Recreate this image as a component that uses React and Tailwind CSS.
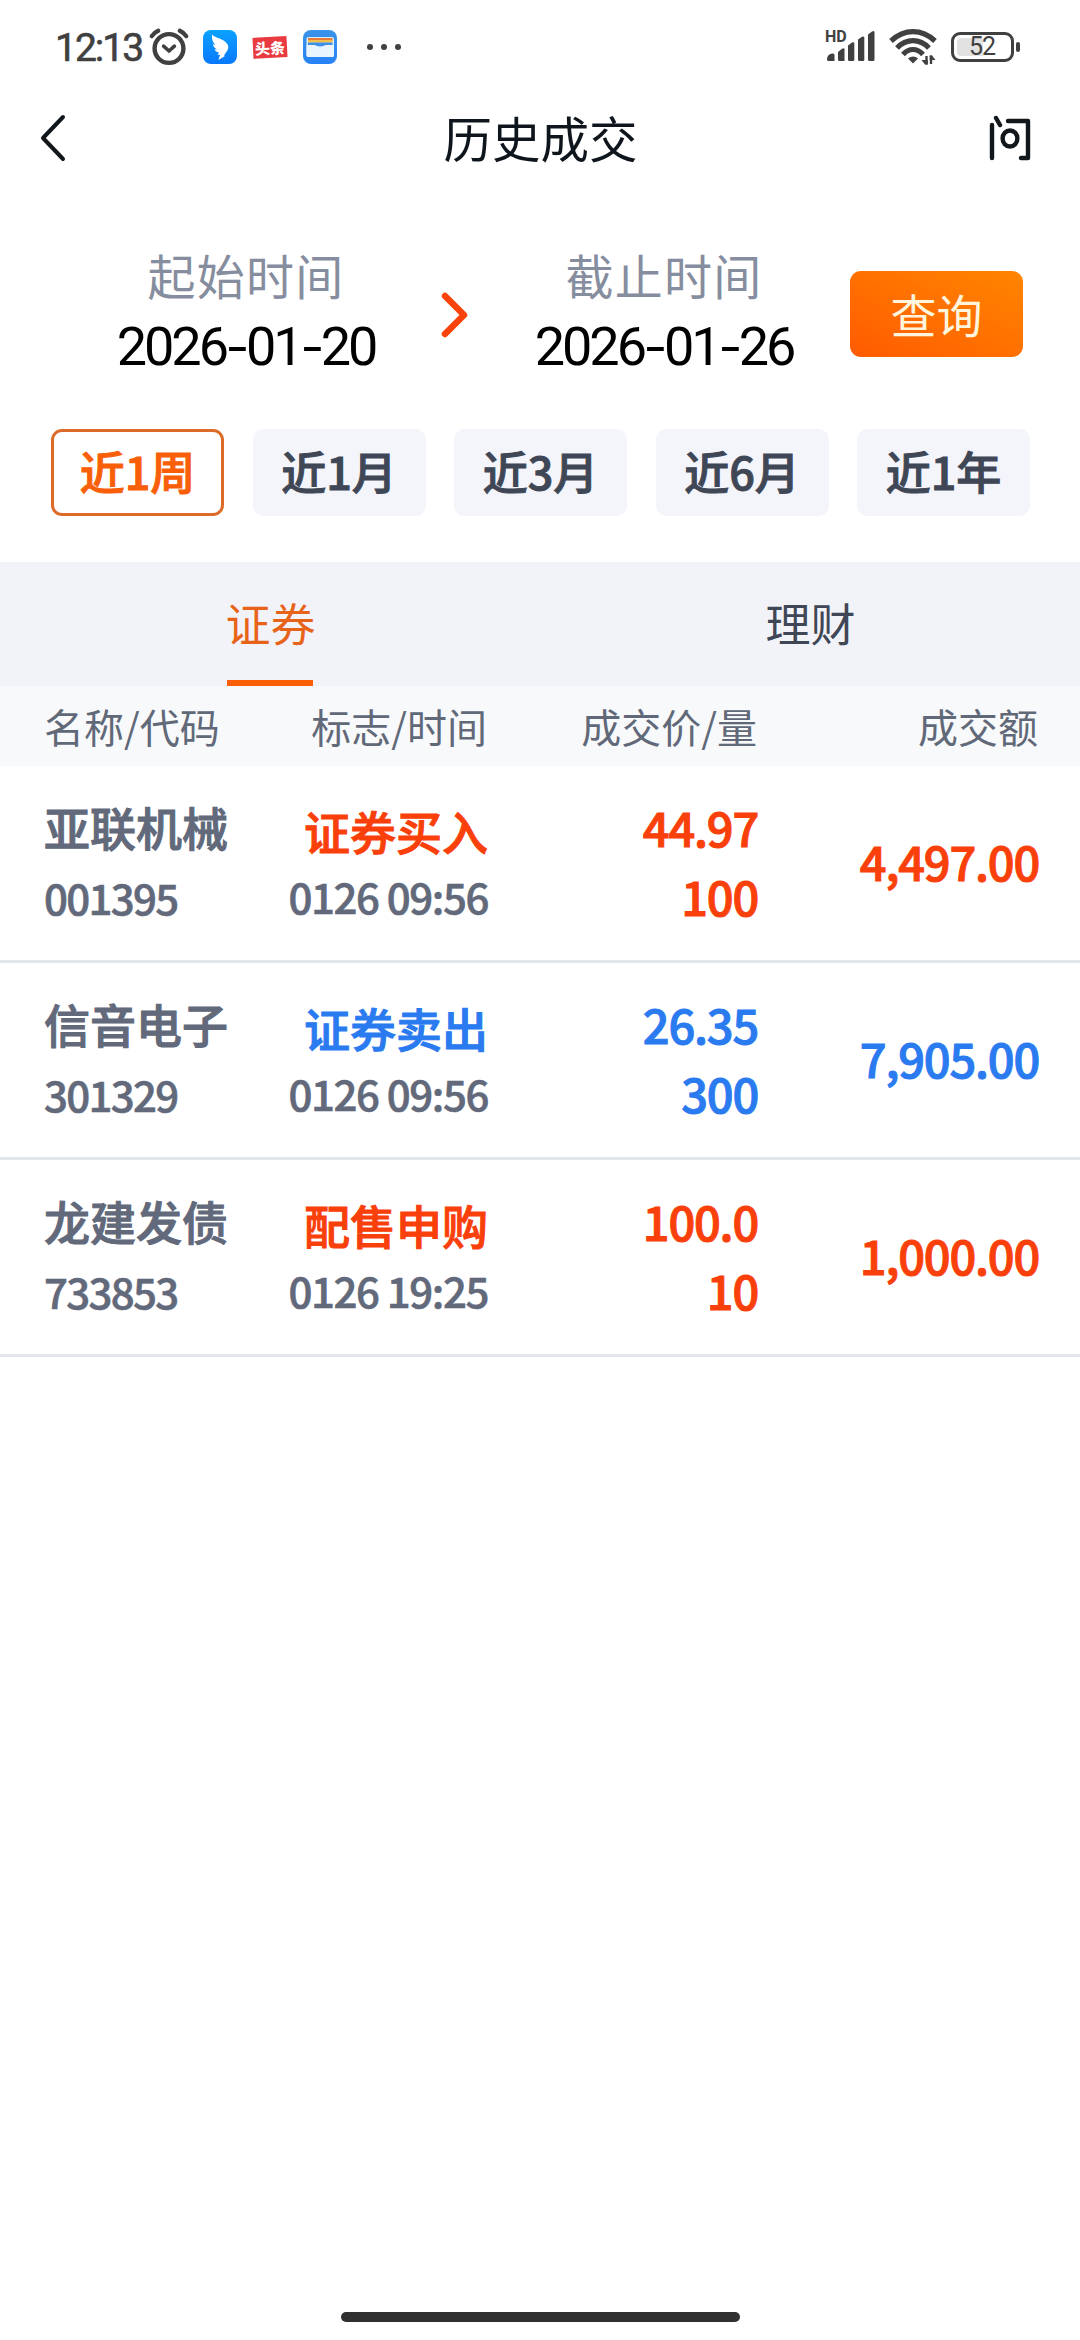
const cjk = "font-['Noto_Sans_CJK_SC','Noto_Sans',sans-serif]";

const trades = [
  { name: "亚联机械", code: "001395", flag: "证券买入", time: "0126 09:56", price: "44.97", qty: "100", amount: "4,497.00", color: "text-[#fa400a]" },
  { name: "信音电子", code: "301329", flag: "证券卖出", time: "0126 09:56", price: "26.35", qty: "300", amount: "7,905.00", color: "text-[#2a7af0]" },
  { name: "龙建发债", code: "733853", flag: "配售申购", time: "0126 19:25", price: "100.0", qty: "10", amount: "1,000.00", color: "text-[#fa400a]" },
];

const ranges = ["近1周", "近1月", "近3月", "近6月", "近1年"];

function AlarmIcon() {
  return (
    <svg width="40" height="38" viewBox="0 0 40 38" fill="none" stroke="#404040" strokeLinecap="round">
      <circle cx="20" cy="20.5" r="14.4" strokeWidth="4.4" />
      <path d="M2.8 8.2Q5 4.6 9.2 2.8M37.2 8.2Q35 4.6 30.8 2.8" strokeWidth="4.2" />
      <path d="M14.6 18.2L20 23L25.4 18.2" strokeWidth="3.6" strokeLinejoin="round" />
    </svg>
  );
}

function WingIcon() {
  return (
    <svg width="34" height="34" viewBox="0 0 34 34">
      <defs>
        <linearGradient id="wing" x1="0" y1="0" x2="0" y2="1">
          <stop offset="0" stopColor="#0aa2ff" />
          <stop offset="1" stopColor="#0878fb" />
        </linearGradient>
      </defs>
      <rect width="34" height="34" rx="8" fill="url(#wing)" />
      <path d="M9 4.5C12 8 21 9 23.5 13C25.5 15 25.8 17.5 24.6 20L21 25.5L22 26L15.4 30L17 25L14.6 24.6L16 22.4C13.5 22 12.2 21 11.6 19.2L14 19.4C11.5 18 10.3 16.5 9.8 14.2L12.5 15C9.8 12.5 8.5 9 9 4.5Z" fill="#fff" />
    </svg>
  );
}

function WalletIcon() {
  return (
    <svg width="34" height="34" viewBox="0 0 34 34">
      <defs>
        <linearGradient id="wallet" x1="0" y1="0" x2="0" y2="1">
          <stop offset="0" stopColor="#3a94e8" />
          <stop offset="1" stopColor="#2882f6" />
        </linearGradient>
      </defs>
      <rect width="34" height="34" rx="8" fill="url(#wallet)" />
      <rect x="3.5" y="7" width="27.5" height="20" rx="2" fill="#d8ecfb" />
      <rect x="5" y="8" width="24.5" height="3" fill="#e8793a" />
      <rect x="5" y="10" width="24.5" height="2.6" fill="#f3c04c" />
      <path d="M5 12.6H29.5V15H23Q17 18.4 11.5 15H5Z" fill="#3f8fe6" />
      <path d="M3.5 15H11.5Q17 18.4 23 15H31V25Q31 27 29 27H5.500Q3.500 27 3.500 25Z" fill="#eaf6ff" />
    </svg>
  );
}

function SignalIcon() {
  return (
    <svg width="52" height="38" viewBox="0 0 52 38" fill="#404040">
      <path d="M2 31.500Q2 26.500 7 25.500Q9.500 25 9.500 27V33H3.500Q2 33 2 31.500Z" />
      <path d="M13 24L17 20.800Q19.500 19.500 19.500 21.500V33H14.500Q13 33 13 31.500Z" />
      <path d="M23 17.500L27 14.500Q29.300 13.500 29.300 15.500V31.500Q29.300 33 28 33H24.500Q23 33 23 31.500Z" />
      <path d="M33 11.500L37 8.800Q39.300 7.800 39.300 9.800V31.500Q39.300 33 38 33H34.500Q33 33 33 31.500Z" />
      <path d="M43 6.500L47 3.500Q49.500 2 49.500 4.500V31.500Q49.500 33 48 33H44.500Q43 33 43 31.500Z" />
    </svg>
  );
}

function WifiIcon() {
  return (
    <svg width="48" height="38" viewBox="0 0 48 38" fill="none" stroke="#404040" strokeWidth="5.200">
      <path d="M2 13Q12 3.700 24 3.700T46 13" />
      <path d="M8 20Q15 12.700 24 12.700T40 20" />
      <path d="M14 26.500Q18.500 21.500 24 21.500T34 26.500" />
      <path d="M19 30.500Q24 26.500 29 30.500L24 35.500Z" fill="#404040" stroke="none" />
      <path d="M37.500 28V36.500M42 36V27.500" strokeWidth="2.400" />
      <path d="M38.800 36.500H36L32.500 32H38.800ZM40.700 27.500H43L46.500 32H40.700Z" fill="#404040" stroke="none" />
    </svg>
  );
}

function StatusBar() {
  return (
    <div className="flex h-[94px] items-center justify-between pl-[55px] pr-[60px] text-[#404040]">
      <div className="flex items-center">
        <span className="w-[94px] whitespace-nowrap pt-[2px] font-['Roboto',sans-serif] text-[39px] font-normal leading-[40px] tracking-[-2px] [-webkit-text-stroke:0.600px_#404040]">12:13</span>
        <span className="mr-[14px] flex"><AlarmIcon /></span>
        <WingIcon />
        <span className="ml-[16px] flex h-[21px] w-[34px] rotate-[-3deg] items-center justify-center bg-[#e83a3f] font-['Noto_Sans_CJK_SC',sans-serif] text-[15px] font-black leading-[20px] text-white">头条</span>
        <span className="ml-[16px] flex"><WalletIcon /></span>
        <span className="ml-[30px] flex gap-[8px]">
          <i className="h-[6px] w-[6px] rounded-full bg-[#404040]" />
          <i className="h-[6px] w-[6px] rounded-full bg-[#404040]" />
          <i className="h-[6px] w-[6px] rounded-full bg-[#404040]" />
        </span>
      </div>
      <div className="flex items-center">
        <div className="relative mr-[12px] flex">
          <span className="absolute left-[0px] top-[1px] font-['Roboto',sans-serif] text-[16px] font-bold leading-[16px]">HD</span>
          <SignalIcon />
        </div>
        <WifiIcon />
        <div className="ml-[14px] flex h-[30px] w-[63px] rounded-[9px] border-[3px] border-[#404040] p-[3px]">
          <div className="relative h-full w-[26px] rounded-l-[4px] bg-[#e2e2e2]">
            <span className="absolute left-[12px] top-[-3px] font-['Roboto',sans-serif] text-[25px] leading-[24px] tracking-[-1px]">52</span>
          </div>
        </div>
        <i className="ml-[2px] h-[10px] w-[4px] rounded-[2px] bg-[#404040]" />
      </div>
    </div>
  );
}

function DateField({ label, value }) {
  const parts = value.split("-");
  return (
    <div className="flex w-[270px] flex-col items-center">
      <span className="text-[48px] leading-[64px] tracking-[1.300px] text-[#868d9e]">{label}</span>
      <span className="flex whitespace-nowrap font-['Roboto',sans-serif] text-[54px] leading-[82px] tracking-[-3px] text-black">
        {parts[0]}
        <span className="ml-[4px] mr-[1px] inline-block scale-x-[1.300] tracking-normal">-</span>
        {parts[1]}
        <span className="ml-[4px] mr-[1px] inline-block scale-x-[1.300] tracking-normal">-</span>
        {parts[2]}
      </span>
    </div>
  );
}

export default function App() {
  return (
    <div className={`${cjk} flex h-[2340px] w-[1080px] flex-col overflow-hidden bg-white`}>
      <StatusBar />

      <header className="flex h-[90px] items-center justify-between pl-[39px] pr-[48px] text-[#0f151c]">
        <svg width="55" height="50" viewBox="0 0 55 50" fill="none" stroke="#12171c" strokeWidth="4" strokeLinecap="round" strokeLinejoin="round">
          <path d="M24 3L4 24L24 45" />
        </svg>
        <h1 className="h-[90px] text-[48.500px] font-normal leading-[86px]">历史成交</h1>
        <svg width="45" height="50" viewBox="0 0 45 50" fill="none" stroke="#12171c" strokeWidth="4.400" strokeLinecap="round" strokeLinejoin="round">
          <path d="M5 11V44M9 4L13 11M21 7H41V44H34" />
          <ellipse cx="23" cy="24.500" rx="7.400" ry="8" />
        </svg>
      </header>

      <section className="flex h-[245px] pt-[58px]">
        <div className="ml-[111px]"><DateField label="起始时间" value="2026-01-20" /></div>
        <svg className="ml-[57px] mt-[48px]" width="32" height="50" viewBox="0 0 32 50" fill="none" stroke="#fa430a" strokeWidth="6.500" strokeLinecap="round" strokeLinejoin="round">
          <path d="M7 6L26 25L7 44" />
        </svg>
        <div className="ml-[59px]"><DateField label="截止时间" value="2026-01-26" /></div>
        <button className="ml-[51px] mt-[29px] h-[86px] w-[173px] rounded-[11px] bg-linear-to-tr from-[#ff5a00] to-[#ff8400] pb-[2px] text-[46px] leading-[80px] text-[#fff4dc]">查询</button>
      </section>

      <nav className="flex h-[133px] justify-between pl-[51px] pr-[50px]">
        {ranges.map((r, i) => (
          <button
            key={r}
            className={`h-[87px] w-[173px] rounded-[11px] border-[3px] pb-[3px] text-[45px] font-medium leading-[76px] [-webkit-text-stroke:1px_currentColor] ${
              i === 0 ? "border-[#dc6a28] text-[#f95f08]" : "border-[#f4f5fa] bg-[#f4f5fa] text-[#3f4756]"
            }`}
          >
            {r}
          </button>
        ))}
      </nav>

      <div className="grid h-[124px] grid-cols-2 bg-[#f2f3f8] text-[45px]">
        <div className="flex flex-col items-center justify-between text-[#e8631a]">
          <span className="h-[118px] pl-px leading-[122px]">证券</span>
          <i className="h-[6px] w-[86px] shrink-0 bg-[#fa5f08]" />
        </div>
        <div className="flex flex-col items-center text-[#3f4756]">
          <span className="h-[118px] pl-px leading-[122px]">理财</span>
        </div>
      </div>

      <div className="grid h-[80px] grid-cols-[242px_201px_270px_281px] bg-[#f8f9fb] pl-[44px] text-[40px] leading-[80px] text-[#616979]">
        <span>名称/代码</span>
        <span className="text-right">标志/时间</span>
        <span className="text-right">成交价/量</span>
        <span className="text-right">成交额</span>
      </div>

      {trades.map((t) => (
        <div
          key={t.code}
          className="grid h-[197px] grid-cols-[232px_212px_270px_281px] border-b-[3px] border-[#e3e6ea] pl-[44px] font-medium text-[#61697b] [-webkit-text-stroke:1px_currentColor]"
        >
          <div className="flex flex-col pt-[27px]">
            <span className="text-[46px] leading-[66px]">{t.name}</span>
            <span className="text-[42px] leading-[76px] tracking-[-1.700px] [-webkit-text-stroke-width:0.600px]">{t.code}</span>
          </div>
          <div className="flex flex-col items-end whitespace-nowrap pt-[31px]">
            <span className={`text-[46px] leading-[66px] ${t.color}`}>{t.flag}</span>
            <span className="text-[42px] leading-[65px] tracking-[-1.400px] [-webkit-text-stroke-width:0.600px]">{t.time}</span>
          </div>
          <div className={`flex flex-col items-end pt-[26px] text-[47px] leading-[69px] tracking-[-1.200px] ${t.color}`}>
            <span>{t.price}</span>
            <span>{t.qty}</span>
          </div>
          <div className={`h-[194px] text-right text-[47px] leading-[189px] tracking-[-1.200px] ${t.color}`}>{t.amount}</div>
        </div>
      ))}

      <div className="mx-auto mb-[18px] mt-auto h-[10px] w-[399px] rounded-full bg-[#303030]" />
    </div>
  );
}
